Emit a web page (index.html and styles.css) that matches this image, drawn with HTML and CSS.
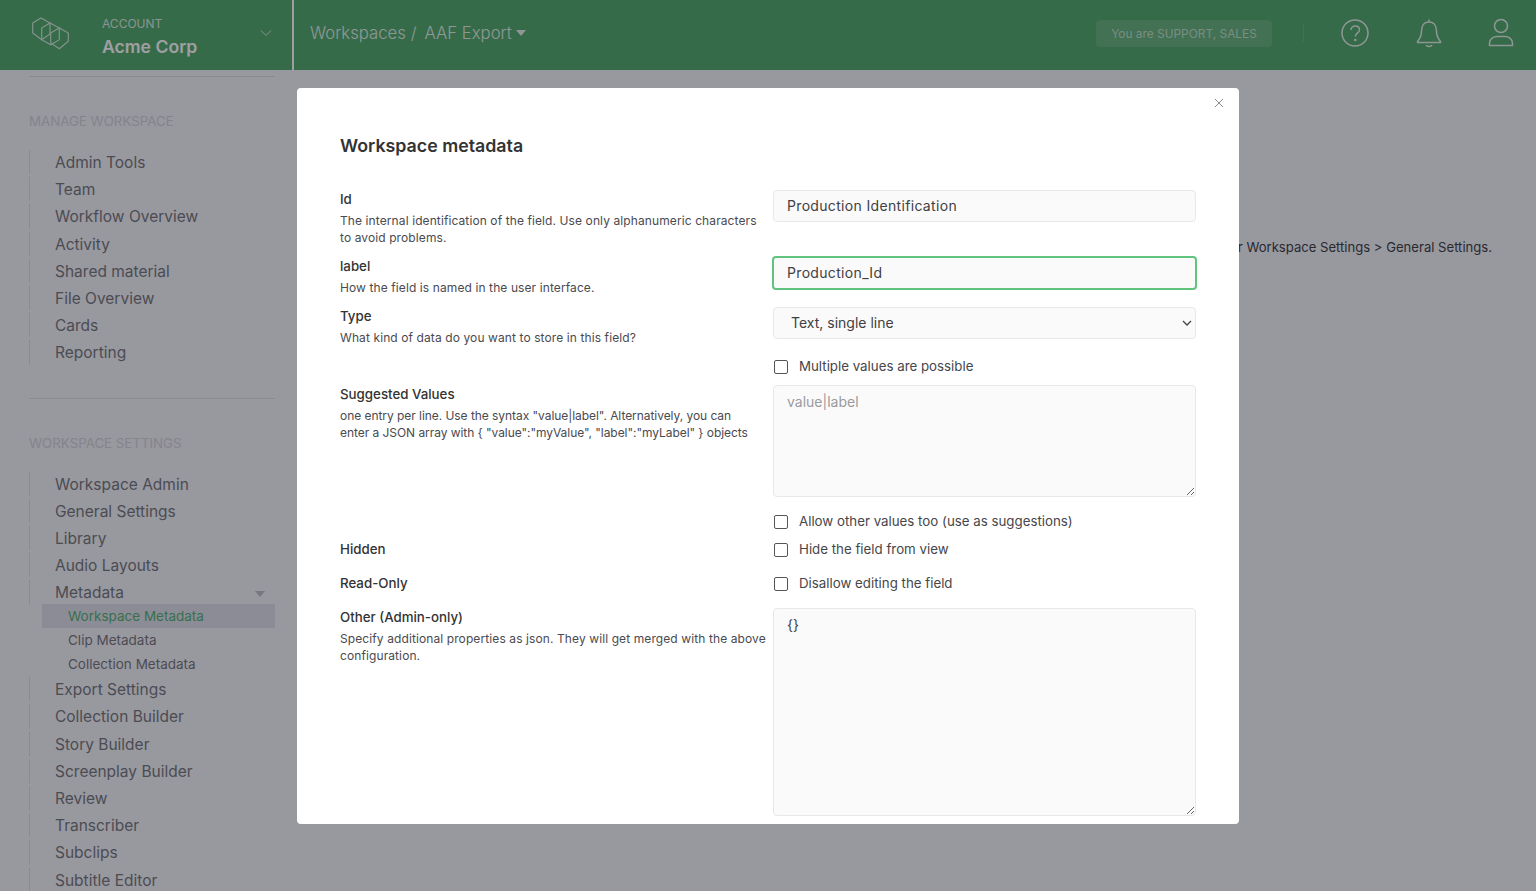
FILE: index.html
```html
<!DOCTYPE html>
<html>
<head>
<title>Workspace metadata</title>
<link rel="stylesheet" href="styles.css">
</head>
<body>

<header class="topbar">
  <div class="account">
    <svg class="logo" width="40" height="36" viewBox="0 0 40 36" fill="none" stroke="currentColor" stroke-width="1.2">
      <path d="M2.7 8 L11 3 L20 8 L20 19 L11.7 24.7 L2.7 18 Z"/>
      <path d="M11.7 13 L20 8 L29.3 13 L29.3 24.7 L20.7 29.7 L11.7 24.7 Z"/>
      <path d="M20.7 18 L29.3 13 L38.3 18 L38.3 26.3 L29.3 33.7 L20.7 28 Z"/>
    </svg>
    <div class="account-name">
      <small>ACCOUNT</small>
      <strong>Acme Corp</strong>
    </div>
    <svg class="account-arrow" width="12" height="8" viewBox="0 0 12 8" fill="none" stroke="currentColor"><path d="M1 1.5 L6 6.5 L11 1.5"/></svg>
  </div>
  <nav class="crumbs">
    <a>Workspaces</a><span class="slash">/</span><a>AAF Export</a><span class="caret"></span>
  </nav>
  <div class="roles">You are SUPPORT, SALES</div>
  <div class="top-icons">
    <svg width="30" height="30" viewBox="0 0 30 30" fill="none" stroke="currentColor" stroke-width="1.5"><circle cx="15" cy="15" r="13"/><path d="M11 12 C11 6.5 19.5 7 19.5 12 C19.5 15 15.3 15.3 15.3 18.5"/><circle cx="15.3" cy="22" r=".6"/></svg>
    <svg width="26" height="30" viewBox="0 0 26 30" fill="none" stroke="currentColor" stroke-width="1.5"><path d="M13 1.5 V4 C7.5 4 5.5 8.5 5.5 13 C5.5 19 3.5 21 1.5 23.5 V24.5 H24.5 V23.5 C22.5 21 20.5 19 20.5 13 C20.5 8.5 18.5 4 13 4"/><path d="M10 27 C11 29 15 29 16 27"/></svg>
    <svg width="26" height="30" viewBox="0 0 26 30" fill="none" stroke="currentColor" stroke-width="1.5"><circle cx="13" cy="8" r="6.5"/><path d="M1.5 27.5 V25 C1.5 20.5 6 18.5 9 18.5 H17 C20 18.5 24.5 20.5 24.5 25 V27.5 Z"/></svg>
  </div>
</header>

<div class="page">
  <aside class="sidebar">
    <h4>MANAGE WORKSPACE</h4>
    <ul>
      <li>Admin Tools</li>
      <li>Team</li>
      <li>Workflow Overview</li>
      <li>Activity</li>
      <li>Shared material</li>
      <li>File Overview</li>
      <li>Cards</li>
      <li>Reporting</li>
    </ul>
    <h4 class="second">WORKSPACE SETTINGS</h4>
    <ul>
      <li>Workspace Admin</li>
      <li>General Settings</li>
      <li>Library</li>
      <li>Audio Layouts</li>
      <li class="open">Metadata<span class="caret-small"></span></li>
      <li class="sub current">Workspace Metadata</li>
      <li class="sub">Clip Metadata</li>
      <li class="sub">Collection Metadata</li>
      <li>Export Settings</li>
      <li>Collection Builder</li>
      <li>Story Builder</li>
      <li>Screenplay Builder</li>
      <li>Review</li>
      <li>Transcriber</li>
      <li>Subclips</li>
      <li>Subtitle Editor</li>
    </ul>
  </aside>
  <main class="content">
    <p>You can change the defaults for new metadata fields under Workspace Settings &gt; General Settings.</p>
  </main>
</div>

<div class="overlay">
  <div class="modal">
    <svg class="close" width="10" height="10" viewBox="0 0 10 10" stroke="currentColor"><path d="M1 1 L9 9 M9 1 L1 9"/></svg>
    <h2>Workspace metadata</h2>

    <div class="row row-id">
      <div class="info"><label>Id</label><p>The internal identification of the field. Use only alphanumeric characters to avoid problems.</p></div>
      <div class="control"><input type="text" value="Production Identification"></div>
    </div>
    <div class="row row-label">
      <div class="info"><label>label</label><p>How the field is named in the user interface.</p></div>
      <div class="control"><input class="focused" type="text" value="Production_Id"></div>
    </div>
    <div class="row row-type">
      <div class="info"><label>Type</label><p>What kind of data do you want to store in this field?</p></div>
      <div class="control select-wrap">
        <select><option>Text, single line</option></select>
        <svg class="select-arrow" width="10" height="6" viewBox="0 0 10 6" fill="none" stroke="currentColor" stroke-width="1.3"><path d="M1 1 L5 5 L9 1"/></svg>
      </div>
    </div>
    <div class="row row-check">
      <div class="info"></div>
      <div class="control"><span class="check"><i></i>Multiple values are possible</span></div>
    </div>
    <div class="row row-values">
      <div class="info"><label>Suggested Values</label><p class="tight">one entry per line. Use the syntax "value|label". Alternatively, you can enter a JSON array with { "value":"myValue", "label":"myLabel" } objects</p></div>
      <div class="control"><textarea class="short" placeholder="value|label"></textarea></div>
    </div>
    <div class="row row-check">
      <div class="info"></div>
      <div class="control"><span class="check"><i></i>Allow other values too (use as suggestions)</span></div>
    </div>
    <div class="row row-check row-hidden">
      <div class="info"><label>Hidden</label></div>
      <div class="control"><span class="check"><i></i>Hide the field from view</span></div>
    </div>
    <div class="row row-check row-hidden">
      <div class="info"><label>Read-Only</label></div>
      <div class="control"><span class="check"><i></i>Disallow editing the field</span></div>
    </div>
    <div class="row">
      <div class="info"><label>Other (Admin-only)</label><p>Specify additional properties as json. They will get merged with the above configuration.</p></div>
      <div class="control"><textarea class="tall">{}</textarea></div>
    </div>
  </div>
</div>

</body>
</html>
```

FILE: styles.css
```css
* { box-sizing: border-box; }
html, body { height: 100%; }
body { margin: 0; height: 891px; overflow: hidden; background: #f4f4f9; color: #3a3a3f; font-family: "Inter", "Liberation Sans", sans-serif; }

.topbar { height: 70px; background: #4fa868; color: #fff; display: flex; align-items: center; }
.account { width: 294px; height: 70px; flex: none; display: flex; align-items: center; border-right: 2px solid #fff; padding-left: 30px; }
.logo { flex: none; margin-right: 32px; margin-bottom: 4px; opacity: .75; }
.account-name { padding-top: 4px; }
.account-name small { display: block; font-size: 12px; line-height: 16px; opacity: .8; }
.account-name strong { display: block; font-size: 17.6px; line-height: 24px; font-weight: 600; margin-top: 3px; }
.account-arrow { margin-left: auto; margin-right: 20px; margin-bottom: 4px; opacity: .8; }
.crumbs { margin-left: 16px; margin-bottom: 4px; font-size: 16.7px; display: flex; align-items: center; opacity: .85; font-weight: 300; }
.slash { margin: 0 8px 0 5px; }
.caret { width: 0; height: 0; border: 5px solid transparent; border-top: 6px solid #fff; border-bottom: 0; margin-left: 4px; }
.roles { margin-left: auto; margin-bottom: 4px; width: 176px; height: 27px; line-height: 27px; text-align: center; font-size: 11.9px; border-radius: 4px; background: rgba(255,255,255,.12); color: rgba(255,255,255,.62); }
.top-icons { display: flex; align-items: center; gap: 46px; margin-left: 31px; margin-bottom: 4px; padding-left: 37px; padding-right: 22px; position: relative; opacity: .85; }
.top-icons::before { content: ""; position: absolute; left: 0; top: 6px; height: 18px; border-left: 1px solid rgba(255,255,255,.15); }

.page { display: flex; }
.sidebar { width: 294px; flex: none; padding: 6px 19px 0 29px; }
.sidebar::before { content: ""; display: block; border-top: 1px solid #dcdce2; }
.sidebar h4 { margin: 36px 0 0; font-size: 13.3px; line-height: 16px; font-weight: 400; color: #d2d2d8; }
.sidebar h4.second { margin-top: 31px; padding-top: 36px; border-top: 1px solid #dcdce2; }
.sidebar ul { list-style: none; margin: 20px 0 0; padding: 0; }
.sidebar li { position: relative; font-size: 15.5px; line-height: 27.2px; padding-left: 26px; color: #747479; }
.sidebar li::before { content: ""; position: absolute; left: 0; top: 1px; bottom: 2px; border-left: 1px solid #dcdce2; }
.sidebar li.open { margin-bottom: -2.5px; }
.sidebar li.sub { font-size: 13.5px; line-height: 24px; margin-left: 13px; padding-left: 26px; }
.sidebar li.sub::before { display: none; }
.sidebar li.current { background: #dfe0ea; color: #55b070; }
.caret-small { position: absolute; right: 10px; top: 12px; width: 0; height: 0; border: 5px solid transparent; border-top: 6px solid #bdbdc4; border-bottom: 0; }

.content { flex: 1; display: flex; justify-content: flex-end; padding: 168px 44px 0 0; }
.content p { margin: 0; font-size: 13.1px; line-height: 18px; white-space: nowrap; color: #3a3a3f; }

.overlay { position: fixed; left: 0; top: 0; right: 0; bottom: 0; background: rgba(15,15,25,.4); display: flex; justify-content: center; align-items: flex-start; padding-top: 88px; }
.modal { position: relative; width: 942px; height: 736px; overflow: hidden; background: #fff; border-radius: 4px; padding: 47px 43px 0; color: #3a3a3f; }
.close { position: absolute; right: 15px; top: 10px; color: #8a8a8a; }
.modal h2 { margin: 0 0 33px; font-size: 17.8px; line-height: 22px; font-weight: 600; color: #333; }

.row { display: flex; }
.info { width: 433px; flex: none; padding-right: 5px; }
.control { flex: 1; min-width: 0; }
.info label { display: block; font-size: 13.3px; line-height: 18px; font-weight: 500; color: #333; margin-bottom: 5px; }
.info p { margin: 0; font-size: 12px; line-height: 16.5px; letter-spacing: .1px; color: #4a4a4f; }
.info p.tight { letter-spacing: -.05px; padding-right: 20px; }
.row-id { height: 67px; }
.row-label { height: 50px; }
.row-type { height: 50px; }
.row-check { height: 28px; }
.row-hidden { height: 34px; }
.row-values { height: 127px; }

input[type=text], select, textarea { display: block; width: 100%; font-family: inherit; font-size: 14px; color: #3f3f44; background: #fafafa; border: 1px solid #e8e8ea; border-radius: 4px; outline: 0; }
input[type=text], select { height: 32px; padding: 0 13px 2px; }
input[type=text] { letter-spacing: .33px; }
select { appearance: none; padding-left: 17px; }
.select-wrap { position: relative; }
.select-arrow { position: absolute; right: 4px; top: 13px; color: #444; }
input.focused { border: 2px solid #5fc47d; height: 34px; width: calc(100% + 2px); margin: -1px 0 0 -1px; padding: 0 13px 2px; }
textarea { padding: 6.5px 13px; font-size: 14px; line-height: 18px; }
textarea::placeholder { color: #9a9a9f; }
textarea.short { height: 112px; }
textarea.tall { height: 208px; }

.check { display: flex; align-items: center; height: 18px; font-size: 13.3px; color: #46464b; }
.check i { display: block; width: 14px; height: 14px; border: 1px solid #555; border-radius: 2px; margin: 1px 11px 0 1px; }
```
